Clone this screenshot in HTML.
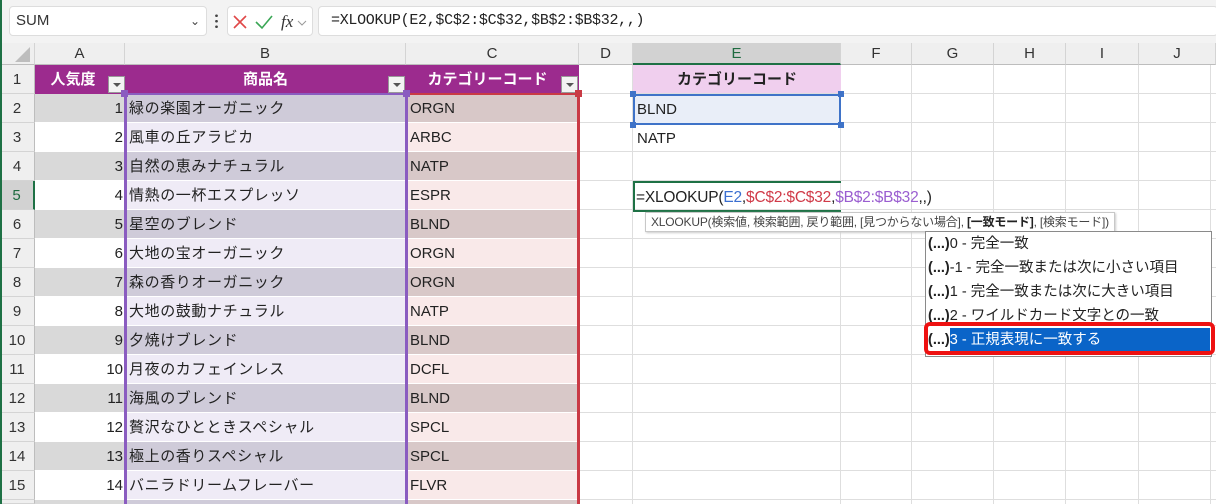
<!DOCTYPE html><html style="width:1216px;height:504px;overflow:hidden"><head><meta charset="utf-8"><style>
*{box-sizing:border-box;margin:0;padding:0}
body{width:1216px;height:504px;overflow:hidden;background:#fff;font-family:"Liberation Sans","Noto Sans CJK JP",sans-serif;position:relative}
.a{position:absolute}
.c{position:absolute;height:29px;line-height:29px;font-size:15px;color:#222;white-space:nowrap;overflow:hidden}
.rh{position:absolute;left:0;width:35px;height:29px;line-height:29px;text-align:center;font-size:15px;color:#333;background:#efefef;border-bottom:1px solid #d4d4d4;border-right:1px solid #bdbdbd}
.ch{position:absolute;top:43px;height:22px;line-height:22px;text-align:center;font-size:15px;color:#333;background:#efefef;border-right:1px solid #d4d4d4;border-bottom:1px solid #bdbdbd}
.dd{position:absolute;width:17px;height:17px;background:#f3f3f3;border:1px solid #999}
.dd:after{content:"";position:absolute;left:4px;top:6px;border-left:4px solid transparent;border-right:4px solid transparent;border-top:4px solid #555}
.mi{position:absolute;left:2px;height:24px;line-height:24px;font-size:14.5px;color:#222;white-space:nowrap}
</style></head><body>
<div class="a" style="left:0;top:0;width:1216px;height:43px;background:#f3f3f3"></div>
<div class="a" style="left:0;top:0;width:2px;height:504px;background:#1e7145;z-index:5"></div>
<div class="a" style="left:9px;top:6px;width:198px;height:30px;background:#fff;border:1px solid #ddd;border-radius:4px;font-size:15px;line-height:28px;padding-left:6px;color:#333">SUM<span style="position:absolute;right:6px;top:0;font-size:12px;color:#444">&#8964;</span></div>
<div class="a" style="left:215px;top:13px;width:3px;height:16px;background:radial-gradient(circle,#444 1.2px,transparent 1.5px) 0 0/3px 5.5px"></div>
<div class="a" style="left:227px;top:6px;width:86px;height:30px;background:#fff;border:1px solid #ddd;border-radius:4px"></div>
<svg class="a" style="left:232px;top:13px" width="80" height="18"><path d="M2 3L14 15M14 3L2 15" stroke="#e04848" stroke-width="1.6"/><path d="M24 9L30 15L40 3" stroke="#3aa655" stroke-width="1.6" fill="none"/><text x="49" y="14" font-family="Liberation Serif" font-style="italic" font-size="17" fill="#333">fx</text><path d="M66 8L70 12L74 8" stroke="#999" fill="none"/></svg>
<div class="a" style="left:318px;top:6px;width:900px;height:30px;background:#fff;border:1px solid #ddd;border-radius:4px;font-family:'Liberation Mono',monospace;font-size:15px;line-height:28px;padding-left:12px;color:#222;letter-spacing:-0.3px">=XLOOKUP(E2,$C$2:$C$32,$B$2:$B$32,,)</div>
<div class="a" style="left:35px;top:65px;width:1181px;height:439px;background:repeating-linear-gradient(to bottom,transparent 0,transparent 28px,#dedede 28px,#dedede 29px)"></div>
<div class="a" style="left:578px;top:65px;width:1px;height:439px;background:#dedede"></div>
<div class="a" style="left:632px;top:65px;width:1px;height:439px;background:#dedede"></div>
<div class="a" style="left:840px;top:65px;width:1px;height:439px;background:#dedede"></div>
<div class="a" style="left:911px;top:65px;width:1px;height:439px;background:#dedede"></div>
<div class="a" style="left:993px;top:65px;width:1px;height:439px;background:#dedede"></div>
<div class="a" style="left:1065px;top:65px;width:1px;height:439px;background:#dedede"></div>
<div class="a" style="left:1138px;top:65px;width:1px;height:439px;background:#dedede"></div>
<div class="a" style="left:1210px;top:65px;width:1px;height:439px;background:#dedede"></div>
<div class="ch" style="left:0;width:35px"><svg width="34" height="22"><path d="M30 4L30 19L15 19Z" fill="#bdbdbd"/></svg></div>
<div class="ch" style="left:35px;width:90px">A</div>
<div class="ch" style="left:125px;width:281px">B</div>
<div class="ch" style="left:406px;width:173px">C</div>
<div class="ch" style="left:579px;width:54px">D</div>
<div class="ch" style="left:633px;width:208px;background:#d2d2d2;color:#1e6b40;border-bottom:2px solid #1e7145">E</div>
<div class="ch" style="left:841px;width:71px">F</div>
<div class="ch" style="left:912px;width:82px">G</div>
<div class="ch" style="left:994px;width:72px">H</div>
<div class="ch" style="left:1066px;width:73px">I</div>
<div class="ch" style="left:1139px;width:77px">J</div>
<div class="rh" style="top:65px">1</div><div class="rh" style="top:94px">2</div><div class="rh" style="top:123px">3</div><div class="rh" style="top:152px">4</div>
<div class="rh" style="top:181px;background:#d2d2d2;color:#1e6b40;border-right:2px solid #1e7145">5</div>
<div class="rh" style="top:210px">6</div><div class="rh" style="top:239px">7</div><div class="rh" style="top:268px">8</div><div class="rh" style="top:297px">9</div><div class="rh" style="top:326px">10</div><div class="rh" style="top:355px">11</div><div class="rh" style="top:384px">12</div><div class="rh" style="top:413px">13</div><div class="rh" style="top:442px">14</div><div class="rh" style="top:471px">15</div><div class="rh" style="top:500px;height:4px"></div>
<div class="a" style="left:35px;top:65px;width:544px;height:29px;background:#9c2b8e"></div>
<div class="c" style="left:35px;top:65px;width:90px;text-align:center;color:#fff;font-weight:bold;padding-right:14px">人気度</div>
<div class="c" style="left:125px;top:65px;width:281px;text-align:center;color:#fff;font-weight:bold">商品名</div>
<div class="c" style="left:406px;top:65px;width:173px;text-align:center;color:#fff;font-weight:bold;padding-right:10px">カテゴリーコード</div>
<div class="dd" style="left:108px;top:76px"></div>
<div class="dd" style="left:388px;top:76px"></div>
<div class="dd" style="left:561px;top:76px"></div>
<div class="a" style="left:35px;top:94px;width:90px;height:410px;background:repeating-linear-gradient(to bottom,#d9d9d9 0,#d9d9d9 29px,#fff 29px,#fff 58px)"></div>
<div class="a" style="left:127px;top:94px;width:279px;height:410px;background:repeating-linear-gradient(to bottom,#cfcbd9 0,#cfcbd9 29px,#efebf6 29px,#efebf6 58px)"></div>
<div class="a" style="left:407px;top:94px;width:170px;height:410px;background:repeating-linear-gradient(to bottom,#d8c8c8 0,#d8c8c8 29px,#f9e9e9 29px,#f9e9e9 58px)"></div>
<div class="a" style="left:35px;top:94px;width:544px;height:410px;background:repeating-linear-gradient(to bottom,transparent 0,transparent 28px,#fff 28px,#fff 29px)"></div>
<div class="a" style="left:124px;top:94px;width:3px;height:410px;background:#8a5cc0"></div>
<div class="a" style="left:405px;top:94px;width:3px;height:410px;background:#8a5cc0"></div>
<div class="a" style="left:577px;top:94px;width:3px;height:410px;background:#c93a45"></div>
<div class="a" style="left:124px;top:93px;width:283px;height:2px;background:#8a5cc0"></div>
<div class="a" style="left:407px;top:93px;width:173px;height:2px;background:#c93a45"></div>
<div class="a" style="left:121px;top:90px;width:7px;height:7px;background:#8a5cc0"></div>
<div class="a" style="left:403px;top:90px;width:7px;height:7px;background:#8a5cc0"></div>
<div class="a" style="left:575px;top:90px;width:7px;height:7px;background:#c93a45"></div>
<div class="a" style="left:35px;top:94px;width:88px;font-size:15px;line-height:29px;text-align:right;color:#222">1<br>2<br>3<br>4<br>5<br>6<br>7<br>8<br>9<br>10<br>11<br>12<br>13<br>14</div>
<div class="a" style="left:129px;top:94px;font-size:15px;line-height:29px;color:#222;letter-spacing:0.6px">緑の楽園オーガニック<br>風車の丘アラビカ<br>自然の恵みナチュラル<br>情熱の一杯エスプレッソ<br>星空のブレンド<br>大地の宝オーガニック<br>森の香りオーガニック<br>大地の鼓動ナチュラル<br>夕焼けブレンド<br>月夜のカフェインレス<br>海風のブレンド<br>贅沢なひとときスペシャル<br>極上の香りスペシャル<br>バニラドリームフレーバー</div>
<div class="a" style="left:410px;top:94px;font-size:15px;line-height:29px;color:#222">ORGN<br>ARBC<br>NATP<br>ESPR<br>BLND<br>ORGN<br>ORGN<br>NATP<br>BLND<br>DCFL<br>BLND<br>SPCL<br>SPCL<br>FLVR</div>
<div class="c" style="left:633px;top:65px;width:208px;height:28px;background:#f0cfee;text-align:center;font-weight:bold">カテゴリーコード</div>
<div class="a" style="left:633px;top:94px;width:208px;height:31px;background:#e9eef8;border:2px solid #3f73c8"></div>
<div class="a" style="left:630px;top:91px;width:6px;height:6px;background:#3f73c8"></div><div class="a" style="left:838px;top:91px;width:6px;height:6px;background:#3f73c8"></div>
<div class="a" style="left:630px;top:122px;width:6px;height:6px;background:#3f73c8"></div><div class="a" style="left:838px;top:122px;width:6px;height:6px;background:#3f73c8"></div>
<div class="c" style="left:637px;top:95px">BLND</div>
<div class="c" style="left:637px;top:124px">NATP</div>
<div class="a" style="left:633px;top:181px;width:208px;height:31px;border:2px solid #1e7145;border-right:none"></div>
<div class="c" style="left:636px;top:183px;background:transparent;font-size:15.5px;overflow:visible;letter-spacing:-0.2px">=XLOOKUP(<span style="color:#3b6fd0">E2</span>,<span style="color:#d03a48">$C$2:$C$32</span>,<span style="color:#9a5ed0">$B$2:$B$32</span>,,)</div>
<div class="a" style="left:645px;top:212px;width:470px;height:20px;background:#fff;border:1px solid #c8c8c8;box-shadow:1px 1px 2px #ccc;font-size:12px;line-height:18px;padding-left:5px;color:#444;white-space:nowrap;overflow:hidden;letter-spacing:-0.2px">XLOOKUP(検索値, 検索範囲, 戻り範囲, [見つからない場合], <b style="color:#222">[一致モード]</b>, [検索モード])</div>
<div class="a" style="left:925px;top:231px;width:287px;height:126px;background:#fff;border:1px solid #8a8a8a">
<div class="mi" style="top:0px"><b>(...)</b>0 - 完全一致</div>
<div class="mi" style="top:24px"><b>(...)</b>-1 - 完全一致または次に小さい項目</div>
<div class="mi" style="top:48px"><b>(...)</b>1 - 完全一致または次に大きい項目</div>
<div class="mi" style="top:72px"><b>(...)</b>2 - ワイルドカード文字との一致</div>
<div class="a" style="left:24px;top:96px;width:260px;height:24px;background:#0a64c8"></div>
<div class="mi" style="top:96px"><b>(...)</b><span style="color:#fff">3 - 正規表現に一致する</span></div>
</div>
<div class="a" style="left:924px;top:322px;width:291px;height:33px;border:4px solid #ee1111;border-radius:6px"></div>
</body></html>
